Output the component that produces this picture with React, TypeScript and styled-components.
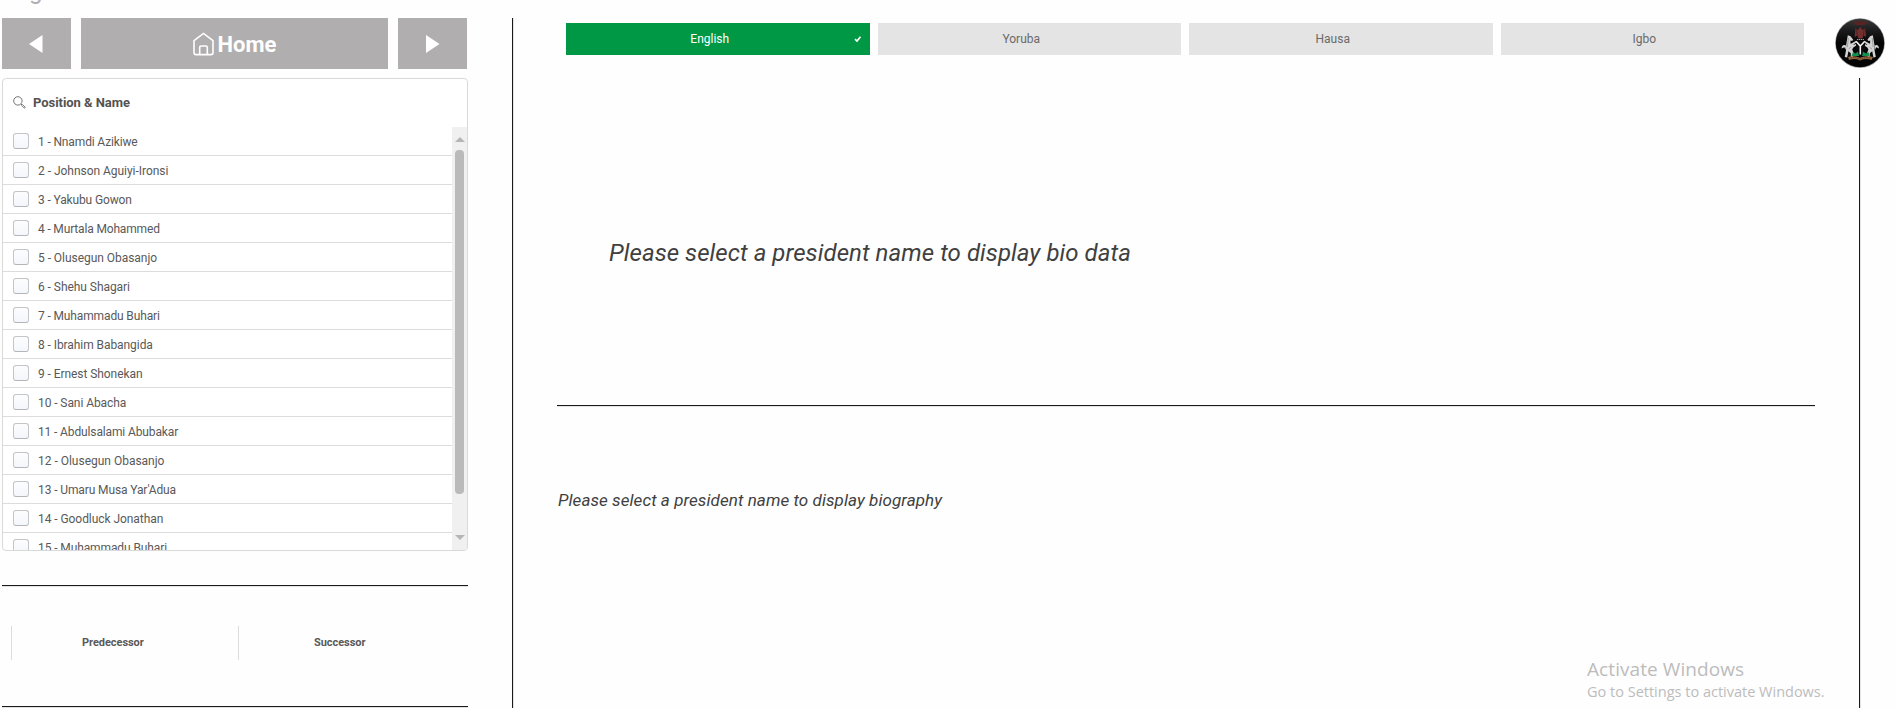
import React from "react";
import styled, { createGlobalStyle } from "styled-components";

const GlobalStyle = createGlobalStyle`
  * { box-sizing: border-box; }
  body {
    margin: 0;
    background: #fefefe;
    font-family: Roboto, "Liberation Sans", sans-serif;
    color: #595959;
    overflow: hidden;
  }
`;

const Page = styled.div`
  width: 1896px;
  height: 708px;
  display: flex;
  flex-direction: column;
  overflow: hidden;
  position: relative;
`;

const SheetTitle = styled.div`
  flex: none;
  height: 18px;
  padding-left: 29px;
  overflow: hidden;
  font-size: 24px;
  line-height: 24px;
  color: #b0aeae;

  span {
    display: block;
    margin-top: -21px;
  }
`;

const Columns = styled.div`
  flex: 1;
  display: flex;
  min-height: 0;
`;

const Sidebar = styled.aside`
  width: 466px;
  margin: 0 44px 0 2px;
  display: flex;
  flex-direction: column;
`;

const VRule = styled.div`
  flex: none;
  width: 2px;
  background: linear-gradient(90deg, #1a1a1a 50%, #e3e3e3 50%);
`;

const HRule = styled.div`
  flex: none;
  height: 2px;
  background: linear-gradient(#1a1a1a 50%, #e3e3e3 50%);
`;

const NavBar = styled.nav`
  display: flex;
  gap: 10px;
  height: 51px;
  width: 465px;
  margin-bottom: 9px;
`;

const NavButton = styled.button<{ $wide?: boolean }>`
  flex: ${(p) => (p.$wide ? "1" : "0 0 69px")};
  display: flex;
  align-items: center;
  justify-content: center;
  gap: 4px;
  padding: 0;
  border: 0;
  background: #b0aeae;
  color: #fff;
  font: 700 22px/50px Roboto, sans-serif;

  span {
    padding-top: 2px;
  }

  svg {
    display: block;
  }
`;

const ListBox = styled.section`
  flex: none;
  height: 473px;
  margin-bottom: 34px;
  border: 1px solid #d9d9d9;
  border-radius: 4px;
  background: #fff;
  display: flex;
  flex-direction: column;
  overflow: hidden;
`;

const ListHeader = styled.header`
  flex: none;
  height: 48px;
  display: flex;
  align-items: center;
  gap: 7px;
  padding: 0 0 1px 10px;
  font-weight: 700;
  font-size: 13px;
  line-height: 15px;
  letter-spacing: -0.05px;
  color: #545352;
`;

const ListBody = styled.div`
  flex: 1;
  min-height: 0;
  display: flex;
`;

const Items = styled.div`
  flex: 1;
  overflow: hidden;
`;

const Item = styled.label<{ $track: number }>`
  height: 29px;
  display: flex;
  align-items: center;
  gap: 9px;
  padding-left: 10px;
  border-bottom: 1px solid #dcdcdc;
  font-size: 12px;
  line-height: 14px;
  letter-spacing: ${(p) => p.$track}px;
  white-space: pre;
`;

const ItemText = styled.span`
  padding-top: 2px;
`;

const Box = styled.span`
  width: 16px;
  height: 16px;
  border: 1px solid #c4c5c8;
  border-bottom-color: #b4b5b8;
  border-radius: 3px;
  background: linear-gradient(#fdfdfe, #f3f6fb);
`;

const ScrollTrack = styled.div`
  width: 15px;
  background: #f0f0f0;
  display: flex;
  flex-direction: column;
  align-items: center;
  padding-top: 10px;
`;

const Arrow = styled.i<{ $down?: boolean }>`
  flex: none;
  border: 5px solid transparent;
  border-width: ${(p) => (p.$down ? "5px 5px 0" : "0 5px 5px")};
  ${(p) => (p.$down ? "border-top-color" : "border-bottom-color")}: #b5b5b5;
`;

const Thumb = styled.div`
  flex: none;
  width: 9px;
  height: 344px;
  margin: 8px 0 41px;
  border-radius: 4px;
  background: #bababa;
`;

const Neighbours = styled.div`
  display: grid;
  grid-template-columns: 227px 1fr;
  height: 32px;
  margin: 39px 0 48px 9px;
`;

const NeighbourCell = styled.div<{ $indent: number }>`
  border-left: 1px solid #dcdcdc;
  padding-left: ${(p) => p.$indent}px;
  font-weight: 700;
  font-size: 11px;
  line-height: 34px;
  letter-spacing: -0.05px;
`;

const Main = styled.main`
  width: 1258px;
  margin-left: 43px;
  display: flex;
  flex-direction: column;
`;

const Languages = styled.div`
  display: grid;
  grid-template-columns: repeat(4, 1fr);
  gap: 8px;
  height: 32px;
  margin: 5px 11px 0 9px;
`;

const Language = styled.button<{ $active?: boolean }>`
  display: grid;
  grid-template-columns: 1fr 16px;
  align-items: center;
  border: 0;
  padding: 0;
  font: 12px/14px Roboto, sans-serif;
  background: ${(p) => (p.$active ? "#009845" : "#e4e4e4")};
  color: ${(p) => (p.$active ? "#fff" : "#6a6a6a")};
`;

const BioPrompt = styled.p`
  height: 350px;
  margin: 0;
  padding: 184px 0 0 52px;
  font-size: 24px;
  line-height: 28px;
  font-style: italic;
  color: #404040;
  letter-spacing: 0.07px;
`;

const BiographyPrompt = styled.p`
  margin: 83px 0 0 1px;
  font-size: 17px;
  line-height: 20px;
  font-style: italic;
  color: #404040;
  letter-spacing: 0.08px;
`;

const Rail = styled.aside`
  width: 50px;
  margin-left: 19.5px;
  display: flex;
  flex-direction: column;

  ${VRule} {
    flex: 1;
    margin: 10px 0 0 24.5px;
  }
`;

const Watermark = styled.div`
  position: absolute;
  left: 1587px;
  top: 656px;
  font-family: "Open Sans", "Noto Sans", sans-serif;
  color: #bcbcbc;
  white-space: nowrap;
`;

const WatermarkTitle = styled.div`
  font-size: 19px;
  line-height: 27px;
  letter-spacing: 0.08px;
`;

const WatermarkText = styled.div`
  font-size: 14.5px;
  line-height: 18px;
`;

const HomeIcon = () => (
  <svg width="21" height="24" viewBox="0 0 21 24" fill="none" stroke="#fff" strokeWidth="1.6">
    <path d="M1 8.6 10.5 1.4 20 8.6V20.5Q20 22.6 18 22.6H3Q1 22.6 1 20.5Z" />
    <path d="M6.7 22V15.2Q6.7 14 8 14H13Q14.3 14 14.3 15.2V22" />
  </svg>
);

const SearchIcon = () => (
  <svg width="13" height="13" viewBox="0 0 13 13" fill="none" stroke="#727272">
    <circle cx="4.9" cy="4.9" r="4.2" strokeWidth="1" />
    <path d="M8 8 9 9" strokeWidth="1" />
    <path d="M8.6 9.5 9.6 8.6 12.2 11.2Q12.3 12.2 11.3 12.2Z" strokeWidth="0.9" />
  </svg>
);

const Horse = () => (
  <g fill="#d2d2d2">
    <path d="M12.8 17.2 15.5 18.2 18.2 21.8 17.1 23.1 15.4 22.4 15.5 25.5 18.8 27 21.8 25.5 22.4 26.8 18.3 29.4 17.2 31.5 18.4 34.4 18 39.5 15.8 39.6 15.8 35.2 13.4 33.2 12.2 39.5 9.8 39 11 32.2 11.2 26.4Z" />
    <path d="M11.2 27.5Q7 25.6 6.6 30.5L9.4 29.2 10.6 31.7ZM15.4 26 20.8 23 21.4 24.2 17 28Z" />
    <path d="M13.4 20 12.4 29M16 29 13.6 31" stroke="#777" strokeWidth=".6" fill="none" />
  </g>
);

const Emblem = () => (
  <svg width="50" height="50" viewBox="0 0 50 50">
    <defs>
      <linearGradient id="gloss" x2="0" y2="1">
        <stop offset="0" stopColor="#3a3a3a" />
        <stop offset=".25" stopColor="#1a1a1c" />
        <stop offset=".5" stopColor="#050505" />
      </linearGradient>
    </defs>
    <circle cx="25" cy="25" r="24.8" fill="#999" />
    <circle cx="25" cy="25" r="24.2" fill="url(#gloss)" />
    <path d="M18.5 4.6Q25 1.8 32 4.4L31 6.4Q25 8 19.5 6.5Z" fill="#5a2222" />
    <path d="M20.5 10 23 12 25.3 9 27.5 12 30.2 10 31 18.8 28.5 17.5 27.5 20.5H23.3L22.4 17.5 19.6 19Z" fill="#743030" />
    <path d="M21.5 10.8 22.4 18M29.3 10.8 28.2 18" stroke="#3b1515" strokeWidth=".6" />
    <path d="M22 21.5h7" stroke="#aaa" strokeWidth="1.2" strokeDasharray="1.2 .7" />
    <Horse />
    <g transform="translate(50.6 0) scale(-1 1)">
      <Horse />
    </g>
    <path d="M21 23H30V31Q29 35 25.4 37Q22 35 21 31Z" fill="#0b0b0b" />
    <path d="M21 23.3 25.3 28 29.8 23.3M25.3 27.5V36.5" stroke="#f2f2f2" strokeWidth="1.6" fill="none" />
    <path d="M16.5 38 18 34 20.5 35.5 23 33.5 24 38ZM27 38 28 33.5 31 35.5 33.5 34 34.5 38Z" fill="#129052" />
    <path d="M13 39Q18 37.4 25 39.8 32 37.4 38 39L36.5 42Q31 40 25 42.4 20 40 14 42Z" fill="#9a6a42" />
    <path d="M15.5 40Q20 38.8 25 41.2 31 38.8 35.5 40" stroke="#36251a" strokeWidth=".7" strokeDasharray="1.5 .8" fill="none" />
  </svg>
);

const presidents: [string, number][] = [
  ["1 - Nnamdi Azikiwe", -0.14],
  ["2 - Johnson Aguiyi-Ironsi", -0.03],
  ["3 - Yakubu Gowon", -0.13],
  ["4 - Murtala Mohammed", -0.16],
  ["5 - Olusegun Obasanjo", -0.04],
  ["6 - Shehu Shagari", -0.05],
  ["7 - Muhammadu Buhari", -0.13],
  ["8 - Ibrahim Babangida", -0.07],
  ["9 - Ernest Shonekan", -0.07],
  ["10 - Sani Abacha", -0.08],
  ["11 - Abdulsalami Abubakar", -0.13],
  ["12 - Olusegun Obasanjo", -0.01],
  ["13 - Umaru Musa Yar'Adua", -0.11],
  ["14 - Goodluck Jonathan", -0.06],
  ["15 - Muhammadu Buhari", -0.1],
];

const languages = ["English", "Yoruba", "Hausa", "Igbo"];

export default function App() {
  return (
    <Page>
      <GlobalStyle />
      <SheetTitle>
        <span>g</span>
      </SheetTitle>
      <Columns>
        <Sidebar>
          <NavBar>
            <NavButton aria-label="Previous">
              <svg width="18" height="18" viewBox="0 0 18 18">
                <path d="M14.5 0V18L1 9Z" fill="#fff" />
              </svg>
            </NavButton>
            <NavButton $wide>
              <HomeIcon />
              <span>Home</span>
            </NavButton>
            <NavButton aria-label="Next">
              <svg width="15" height="18" viewBox="0 0 15 18">
                <path d="M1 0V18L14.5 9Z" fill="#fff" />
              </svg>
            </NavButton>
          </NavBar>
          <ListBox>
            <ListHeader>
              <SearchIcon />
              Position &amp; Name
            </ListHeader>
            <ListBody>
              <Items>
                {presidents.map(([name, track]) => (
                  <Item key={name} $track={track}>
                    <Box />
                    <ItemText>{name}</ItemText>
                  </Item>
                ))}
              </Items>
              <ScrollTrack>
                <Arrow />
                <Thumb />
                <Arrow $down />
              </ScrollTrack>
            </ListBody>
          </ListBox>
          <HRule />
          <Neighbours>
            <NeighbourCell $indent={70}>Predecessor</NeighbourCell>
            <NeighbourCell $indent={75}>Successor</NeighbourCell>
          </Neighbours>
          <HRule />
        </Sidebar>
        <VRule />
        <Main>
          <Languages>
            {languages.map((name, i) => (
              <Language key={name} $active={i === 0}>
                {name}
                {i === 0 && (
                  <svg width="8" height="8" viewBox="0 0 8 8" fill="none" stroke="#fff" strokeWidth="1.6">
                    <path d="M1 4.2 3 6 6.5 1.8" />
                  </svg>
                )}
              </Language>
            ))}
          </Languages>
          <BioPrompt>Please select a president name to display bio data</BioPrompt>
          <HRule />
          <BiographyPrompt>Please select a president name to display biography</BiographyPrompt>
        </Main>
        <Rail>
          <Emblem />
          <VRule />
        </Rail>
      </Columns>
      <Watermark>
        <WatermarkTitle>Activate Windows</WatermarkTitle>
        <WatermarkText>Go to Settings to activate Windows.</WatermarkText>
      </Watermark>
    </Page>
  );
}
